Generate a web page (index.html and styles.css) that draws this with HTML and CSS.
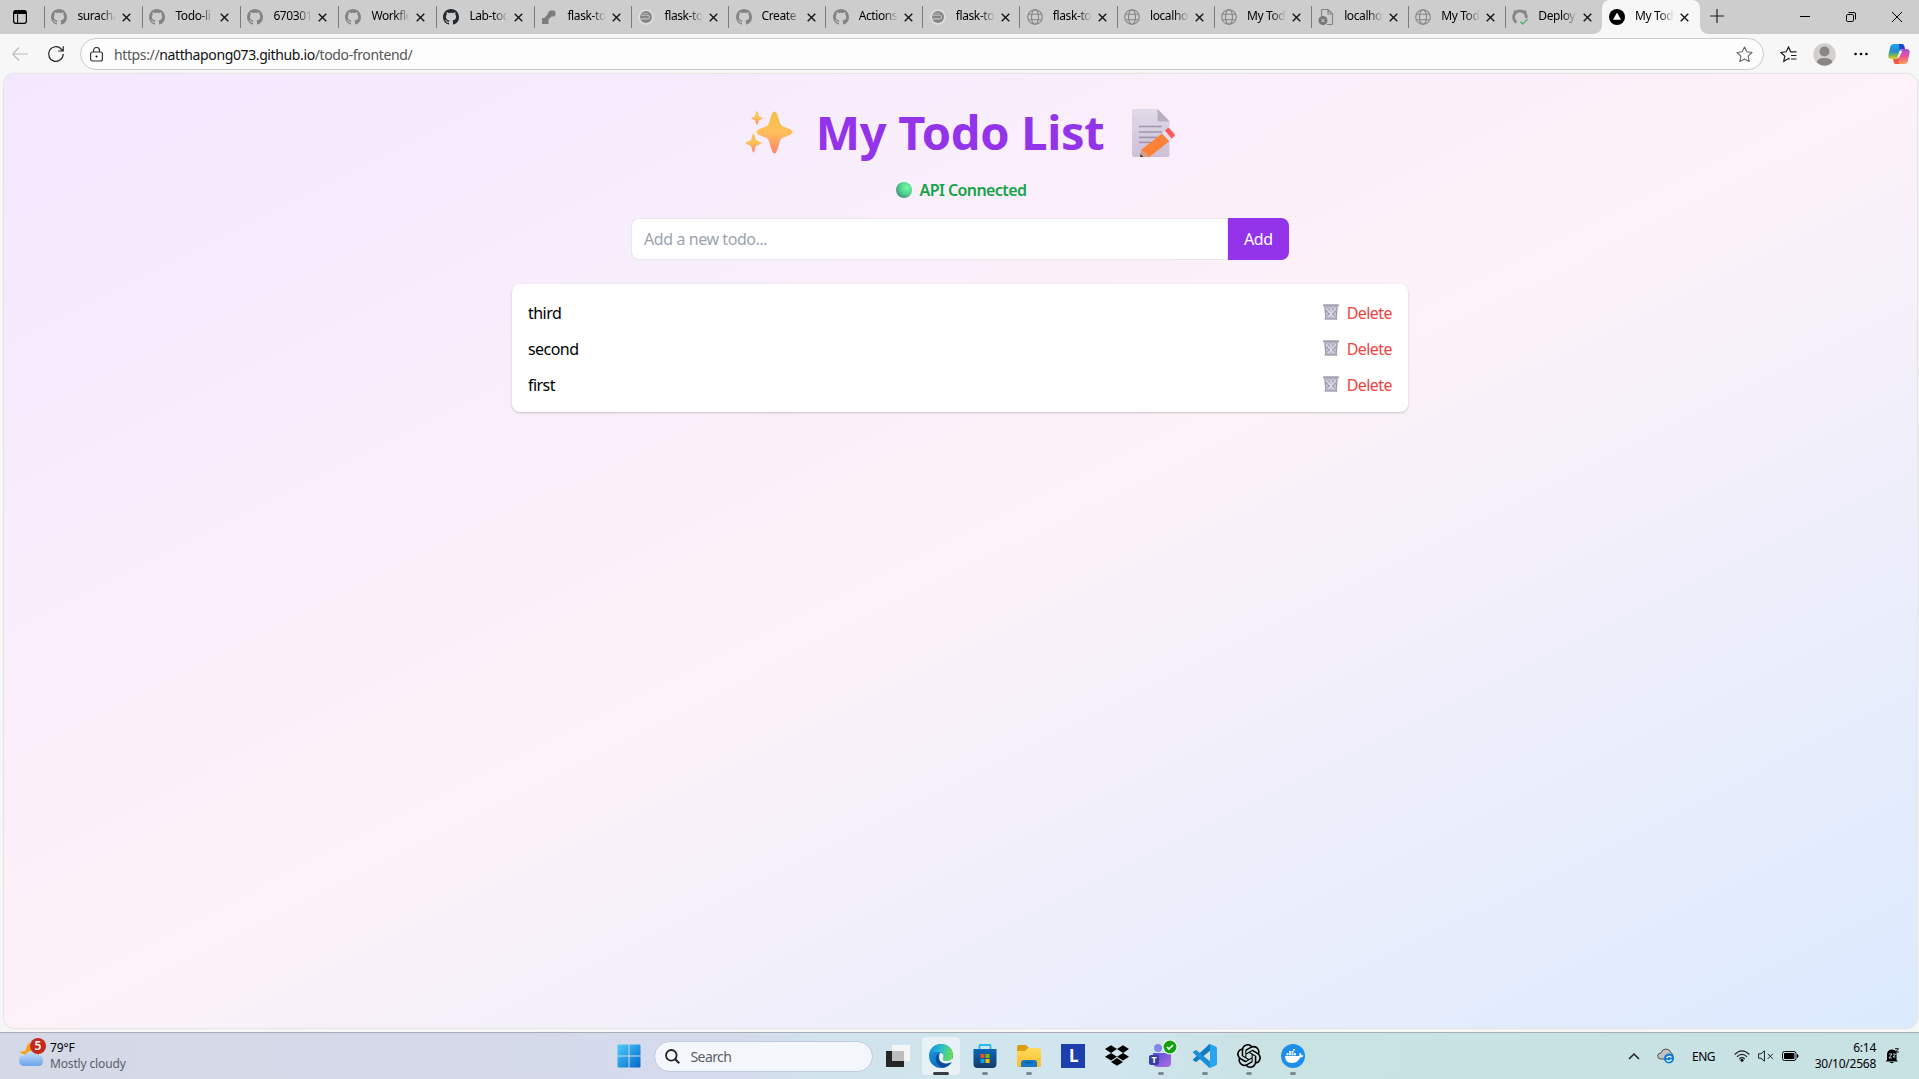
FILE: index.html
```html
<!DOCTYPE html>
<html lang="en">
<head>
<meta charset="utf-8">
<title>My Todo List</title>
<link rel="stylesheet" href="styles.css">
</head>
<body>
<svg class="defs" aria-hidden="true">
  <defs>
    <symbol id="gh" viewBox="0 0 16 16"><path fill="currentColor" d="M8 0C3.58 0 0 3.58 0 8c0 3.54 2.29 6.53 5.47 7.59.4.07.55-.17.55-.38 0-.19-.01-.82-.01-1.49-2.01.37-2.53-.49-2.69-.94-.09-.23-.48-.94-.82-1.13-.28-.15-.68-.52-.01-.53.63-.01 1.08.58 1.23.82.72 1.21 1.87.87 2.33.66.07-.52.28-.87.51-1.07-1.78-.2-3.64-.89-3.64-3.95 0-.87.31-1.59.82-2.15-.08-.2-.36-1.02.08-2.12 0 0 .67-.21 2.2.82.64-.18 1.32-.27 2-.27s1.36.09 2 .27c1.53-1.04 2.2-.82 2.2-.82.44 1.1.16 1.92.08 2.12.51.56.82 1.27.82 2.15 0 3.07-1.87 3.75-3.65 3.95.29.25.54.73.54 1.48 0 1.07-.01 1.93-.01 2.2 0 .21.15.46.55.38A8.01 8.01 0 0 0 16 8c0-4.42-3.58-8-8-8z"/></symbol>
    <symbol id="globe" viewBox="0 0 16 16"><g fill="none" stroke="#858585" stroke-width="1.1"><circle cx="8" cy="8" r="7.3"/><ellipse cx="8" cy="8" rx="3.5" ry="7.3"/><path d="M1.3 5.3h13.4M1.3 10.7h13.4"/></g></symbol>
    <symbol id="ship" viewBox="0 0 16 16"><circle cx="8" cy="8" r="7.8" fill="#dedede"/><circle cx="8" cy="8" r="6" fill="#858585"/><path d="M2.5 6.2h7q2 0 2 2t-2 1.700h-7" fill="none" stroke="#c4c4c4" stroke-width="1.100"/><path d="M3.800 4.500h6" stroke="#aaa"/></symbol>
    <symbol id="pipe" viewBox="0 0 16 16"><path d="M1 9h6.500v6H1z" fill="#7d7d7d"/><path d="M5 10l5-5" stroke="#7d7d7d" stroke-width="4"/><path d="M6.500 4.500 9 1.500h4l1.500 1.500v3L13 7.500H9z" fill="#7d7d7d"/></symbol>
    <symbol id="doc" viewBox="0 0 16 16"><path d="M3.500 7V1.500q0-1 1-1H10L14.500 5v9.500q0 1-1 1H9M10 .5V5h4.500" fill="none" stroke="#858585" stroke-width="1.200"/><circle cx="5" cy="11.500" r="4.500" fill="#777"/><path d="m3.400 9.900 3.200 3.200m0-3.200-3.200 3.200" stroke="#ddd"/></symbol>
    <symbol id="ghok" viewBox="0 0 16 16"><path d="M4.500 13.500A6.300 6.300 0 1 1 14.200 9" fill="none" stroke="#858585" stroke-width="2.800"/><path d="M2.800 1.500v4M13.200 1.500v4" stroke="#858585" stroke-width="2.200"/><path d="m8.500 12.800 2.300 2.200 4.700-5" fill="none" stroke="#59ac6e" stroke-width="1.300"/></symbol>
    <symbol id="vercel" viewBox="0 0 16 16"><circle cx="8" cy="8" r="8" fill="#000"/><path d="M8 3.600 12 10.700H4z" fill="#fff"/></symbol>
    <symbol id="x" viewBox="0 0 10 10"><path d="m.8.8 8.400 8.400m0-8.400L.8 9.200" stroke="#111" stroke-width="1.500"/></symbol>
    <symbol id="bin" viewBox="0 0 16 16"><path d="M1.200 2h13.600l-1 12.500H2.200z" fill="#c7c2d2"/><path d="m4 3.500 8.500 9M8 3.500l5 5M3 7l6 6M12 3.500l-8.500 9M8 3.500l-5 5M13 7l-6 6" stroke="#8f889f" stroke-width=".6"/><path d="m3.500 4 7 9M12.500 4l-7 9M8 4v9" stroke="#eeeaf5" stroke-width=".8"/><path d="m2 3 .8 11M14 3l-.8 11" stroke="#9b96a9"/><rect y=".2" width="16" height="2.200" rx=".7" fill="#a49fae"/><rect x="1.500" y="13.800" width="13" height="2" rx=".7" fill="#aaa6b3"/></symbol>
    <linearGradient id="spark" x1="0" y1="0" x2="0" y2="1"><stop stop-color="#f4c247"/><stop offset=".5" stop-color="#ffbe5b"/><stop offset="1" stop-color="#ff8370"/></linearGradient>
    <linearGradient id="paper" x1="0" y1="0" x2="0" y2="1"><stop stop-color="#e1dae9"/><stop offset="1" stop-color="#ccc0d6"/></linearGradient>
    <radialGradient id="green" cx=".68" cy=".35" r=".75"><stop stop-color="#6ffaa0"/><stop offset=".5" stop-color="#53d98e"/><stop offset="1" stop-color="#458d80"/></radialGradient>
    <linearGradient id="win" x1="0" y1="0" x2="1" y2="1"><stop stop-color="#4ccefb"/><stop offset="1" stop-color="#0067c9"/></linearGradient>
    <linearGradient id="edgeTop" x1="0" y1=".3" x2="1" y2=".5"><stop stop-color="#188edb"/><stop offset=".45" stop-color="#28bdd0"/><stop offset="1" stop-color="#6ddd50"/></linearGradient>
    <linearGradient id="edgeLow" x1="0" y1="0" x2="1" y2="1"><stop stop-color="#1b9de2"/><stop offset="1" stop-color="#0a55b5"/></linearGradient>
    <linearGradient id="copA" x1="0" y1="0" x2="0" y2="1"><stop stop-color="#1ca7ee"/><stop offset=".5" stop-color="#278dcc"/><stop offset=".75" stop-color="#78b757"/><stop offset="1" stop-color="#e8cb28"/></linearGradient>
    <linearGradient id="copB" x1="0" y1="0" x2="0" y2="1"><stop stop-color="#a251e4"/><stop offset=".5" stop-color="#ec5592"/><stop offset="1" stop-color="#ff9d55"/></linearGradient>
    <linearGradient id="bag" x1="0" y1="0" x2="0" y2="1"><stop stop-color="#0a68b5"/><stop offset="1" stop-color="#173a68"/></linearGradient>
    <linearGradient id="fold" x1="0" y1="0" x2="0" y2="1"><stop stop-color="#ffdc60"/><stop offset="1" stop-color="#f9bd25"/></linearGradient>
    <linearGradient id="team" x1="0" y1="0" x2="1" y2="1"><stop stop-color="#4f52cf"/><stop offset="1" stop-color="#b56bea"/></linearGradient>
    <linearGradient id="cloud" x1="0" y1="0" x2="0" y2="1"><stop stop-color="#c7e2fd"/><stop offset="1" stop-color="#6ca3e8"/></linearGradient>
  </defs>
</svg>

<div class="browser">
  <header class="strip">
    <svg class="workspaces" width="14" height="14" viewBox="0 0 14 14"><rect x=".6" y=".6" width="12.800" height="12.800" rx="2.300" fill="none" stroke="#000" stroke-width="1.200"/><path d="M1 1h12v3H1z"/><path d="M4.600 4v9" stroke="#000"/></svg>
    <nav class="tabs">
      <div class="tab wide"><svg class="fav"><use href="#gh"/></svg><span>suracha</span><svg class="close"><use href="#x"/></svg></div>
      <div class="tab wide"><svg class="fav"><use href="#gh"/></svg><span>Todo-li</span><svg class="close"><use href="#x"/></svg></div>
      <div class="tab wide"><svg class="fav"><use href="#gh"/></svg><span>670301</span><svg class="close"><use href="#x"/></svg></div>
      <div class="tab wide"><svg class="fav"><use href="#gh"/></svg><span>Workflo</span><svg class="close"><use href="#x"/></svg></div>
      <div class="tab wide"><svg class="fav dark"><use href="#gh"/></svg><span>Lab-tod</span><svg class="close"><use href="#x"/></svg></div>
      <div class="tab"><svg class="fav"><use href="#pipe"/></svg><span>flask-to</span><svg class="close"><use href="#x"/></svg></div>
      <div class="tab"><svg class="fav"><use href="#ship"/></svg><span>flask-to</span><svg class="close"><use href="#x"/></svg></div>
      <div class="tab"><svg class="fav"><use href="#gh"/></svg><span>Create</span><svg class="close"><use href="#x"/></svg></div>
      <div class="tab"><svg class="fav"><use href="#gh"/></svg><span>Actions</span><svg class="close"><use href="#x"/></svg></div>
      <div class="tab"><svg class="fav"><use href="#ship"/></svg><span>flask-to</span><svg class="close"><use href="#x"/></svg></div>
      <div class="tab"><svg class="fav"><use href="#globe"/></svg><span>flask-to</span><svg class="close"><use href="#x"/></svg></div>
      <div class="tab"><svg class="fav"><use href="#globe"/></svg><span>localho</span><svg class="close"><use href="#x"/></svg></div>
      <div class="tab"><svg class="fav"><use href="#globe"/></svg><span>My Tod</span><svg class="close"><use href="#x"/></svg></div>
      <div class="tab"><svg class="fav"><use href="#doc"/></svg><span>localho</span><svg class="close"><use href="#x"/></svg></div>
      <div class="tab"><svg class="fav"><use href="#globe"/></svg><span>My Tod</span><svg class="close"><use href="#x"/></svg></div>
      <div class="tab"><svg class="fav"><use href="#ghok"/></svg><span>Deploy</span><svg class="close"><use href="#x"/></svg></div>
      <div class="tab active"><svg class="fav"><use href="#vercel"/></svg><span>My Tod</span><svg class="close"><use href="#x"/></svg></div>
    </nav>
    <svg class="newtab" width="14" height="14" viewBox="0 0 14 14"><path d="M7 0v14M0 7h14" stroke="#222" stroke-width="1.200"/></svg>
    <div class="winctl">
      <svg width="10" height="10" viewBox="0 0 10 10"><path d="M0 4.500h10" stroke="#000"/></svg>
      <svg width="10" height="10" viewBox="0 0 10 10"><rect x=".5" y="2.500" width="7" height="7" rx="1.200" fill="none" stroke="#000"/><path d="M2.500.5H8q1.500 0 1.500 1.500v5.500" fill="none" stroke="#000"/></svg>
      <svg width="10" height="10" viewBox="0 0 10 10"><path d="m0 0 10 10M10 0 0 10" stroke="#000"/></svg>
    </div>
  </header>

  <div class="toolbar">
    <svg class="back" width="16" height="14" viewBox="0 0 16 14"><path d="M7 .5.700 7 7 13.500M1 7h15" fill="none" stroke="#b8b8b8" stroke-width="1.100"/></svg>
    <svg class="reload" width="18" height="18" viewBox="0 0 18 18"><path d="M16.200 9A7.300 7.300 0 1 1 14.200 4L16 5.800M16.200 1.200V6h-5" fill="none" stroke="#222" stroke-width="1.200"/></svg>
    <div class="address">
      <svg class="lock" width="13" height="15" viewBox="0 0 13 15"><rect x=".6" y="5" width="11.800" height="9" rx="2" fill="none" stroke="#333" stroke-width="1.200"/><path d="M3.500 5V3.500a3 3 0 0 1 6 0V5" fill="none" stroke="#333" stroke-width="1.200"/><circle cx="6.500" cy="9.500" r="1"/></svg>
      <span class="url">https://<b>natthapong073.github.io</b>/todo-frontend/</span>
      <svg class="star" width="17" height="17" viewBox="0 0 17 17"><path d="m8.500 1 2.300 4.800 5.200.7-3.800 3.700 1 5.300-4.700-2.600-4.700 2.600 1-5.300L1 6.500l5.200-.7z" fill="none" stroke="#666" stroke-width="1.100" stroke-linejoin="round"/></svg>
    </div>
    <svg class="favs" width="17" height="17" viewBox="0 0 17 17"><path d="M9.500 13.500 8.500 12.500l-4.700 2.700 1-5.100L1 6.500l5.200-.7L8.500 1l2.200 4.800h5.800M11 9.500h5.500M11 13h5.500" fill="none" stroke="#222" stroke-width="1.200"/></svg>
    <svg class="profile" width="23" height="23" viewBox="0 0 23 23"><circle cx="11.500" cy="11.500" r="11.200" fill="#d2d0ce"/><circle cx="11.500" cy="8.500" r="5" fill="#8a8683"/><path d="M3.800 19.600Q3.800 15 11.500 15t7.700 4.600A11.200 11.200 0 0 1 3.800 19.600z" fill="#8a8683"/></svg>
    <svg class="dots" width="14" height="4" viewBox="0 0 14 4"><circle cx="1.600" cy="2" r="1.300"/><circle cx="7" cy="2" r="1.300"/><circle cx="12.400" cy="2" r="1.300"/></svg>
    <svg class="copilot" width="22" height="20" viewBox="0 0 22 20"><path d="M9 0h5q1.500 0 2 1.500L17 5h-3q-2 0-2.600 2L9.500 13.500Q9 15 7 15H3.500Q0 15 .3 11.500L2.200 3Q3 0 6 0z" fill="url(#copA)"/><path d="M11 0h3q1.500 0 2 1.500L17 5h-3q-2 0-2.500 1.500z" fill="#1c45c7"/><path d="M13 20H8q-1.500 0-2-1.500L5.200 15H8q2 0 2.600-2l1.900-6.500Q13 5 15 5h3.500q3.500 0 3.200 3.500L19.800 17Q19 20 16 20z" fill="url(#copB)"/><path d="M11 20H8q-1.500 0-2-1.500L5.200 15H8q2 0 2.500-1.500z" fill="#ef5a40"/><path d="M12.300 7h2L11 13.500H9.500z" fill="#f7f7f7"/></svg>
  </div>

  <main class="page">
    <h1>
      <svg width="48" height="44" viewBox="0 0 48 44"><g fill="url(#spark)"><path d="M29.500.5c2 0 3.500 4 5 10 .8 3 1.800 4.500 5 5.500 5 1.800 8 3 8 5s-3 3.500-8 5c-3.200 1-4.200 2.500-5 5.500-1.500 6-3 11-5 11s-3.500-5-5-11c-.8-3-2-4.500-5-5.500-5-1.500-8-3-8-5s3-3.200 8-5c3-1 4.200-2.500 5-5.500 1.500-6 3-10 5-10z"/><path d="M12 0c.7 0 1.500 5 2.300 5.600C15 6.200 18 6.500 18 7.200c0 .8-3 1.200-3.700 1.800-.8.700-1.600 5-2.300 5S10.500 9.700 9.700 9C9 8.400 6 8 6 7.200c0-.7 3-1 3.700-1.600C10.500 5 11.300 0 12 0z"/><path d="M8.500 22.500c1 0 1.700 5.500 2.700 6.500s5.300 2 5.300 3-4.300 2-5.300 3-1.700 6.500-2.700 6.500S6.800 36 5.800 35 .5 33 .5 32s4.300-2 5.300-3 1.700-6.500 2.700-6.500z"/></g></svg>
      <span>My Todo List</span>
      <svg width="43" height="49" viewBox="0 0 43 49"><path d="M2 0h24l11.500 12v34q0 2-2 2H2q-2 0-2-2V2Q0 0 2 0z" fill="url(#paper)"/><path d="M25.500 0v10.500q0 2 2 2h10z" fill="#b9afc1"/><path d="M7 17.500h23M7 23h23M7 28.300h18M7 33.300h12" stroke="#a397ae" stroke-width="1.700"/><path d="m30 24.500 7.500 7.500-20 16-9-2 1-5.500z" fill="#fd8136"/><path d="m9.500 40.500 8 7.500H8.300z" fill="#d2a18c"/><path d="M8.300 45v3h3z" fill="#552447"/><path d="m30 24.500 4-3.500 7 8-3.500 3.500z" fill="#e7dff5"/><path d="m33 21.500 2-2q1.500-1 3 .5l4 4.500q1.500 1.500 0 3l-2.500 2z" fill="#fb5a54"/></svg>
    </h1>
    <p class="status"><svg width="16" height="16" viewBox="0 0 16 16"><circle cx="8" cy="8" r="8" fill="url(#green)"/></svg><span>API Connected</span></p>
    <form class="add">
      <div class="field">Add a new todo...</div>
      <div class="button">Add</div>
    </form>
    <ul class="todos">
      <li><span>third</span><a><svg><use href="#bin"/></svg><span>Delete</span></a></li>
      <li><span>second</span><a><svg><use href="#bin"/></svg><span>Delete</span></a></li>
      <li><span>first</span><a><svg><use href="#bin"/></svg><span>Delete</span></a></li>
    </ul>
  </main>
</div>

<footer class="taskbar">
  <div class="weather">
    <svg width="28" height="29" viewBox="0 0 28 29"><path d="m10 4 2 6 8-2v12H5l1.500-3L0 14l6-1z" fill="#f5a11c"/><path d="M6 28q-6 0-6-5.500T6 17.500Q8 13 13 13t6 4q5 0 5 5.500T19 28z" fill="url(#cloud)"/><circle cx="19" cy="8" r="8" fill="#c42b1c"/><text x="19" y="12.200" class="count">5</text></svg>
    <div class="forecast"><span>79°F</span><span class="muted">Mostly cloudy</span></div>
  </div>
  <div class="apps">
    <svg class="start" width="24" height="24" viewBox="0 0 24 24"><path d="M.5 1.500q0-1 1-1h10v11H.5zM12.500.5h10q1 0 1 1v10h-11zM.5 12.500h11v11h-10q-1 0-1-1zM12.500 12.500h11v10q0 1-1 1h-10z" fill="url(#win)"/></svg>
    <div class="search"><svg width="15" height="15" viewBox="0 0 15 15"><circle cx="6.300" cy="6.300" r="5.300" fill="none" stroke="#222" stroke-width="1.800"/><path d="m10.200 10.200 4 4" stroke="#222" stroke-width="2"/></svg><span>Search</span></div>
    <svg class="views" width="24" height="24" viewBox="0 0 24 24"><path d="M0 7h18v16H0z" fill="#252525"/><path d="M6 1h18v16H6z" fill="#f5f5f5"/><path d="M6 7h12v10H6z" fill="#bdbdbd"/></svg>
    <div class="tile current"><svg width="24" height="24" viewBox="0 0 24 24"><circle cx="12" cy="12" r="12" fill="url(#edgeLow)"/><path d="M.2 10.500C1 4.500 6 0 12 0c7 0 12 5 12 10.500 0 4-3 6.500-6.800 6.500-3 0-4-1.500-3-3 1.500-2.300.3-6-4.200-6C5 8 1.500 8 .2 10.500z" fill="url(#edgeTop)"/><path d="M9.500 9.500C5 12 6 22 14.500 23.700c4-.8 7-3.200 8.500-6-4 2.500-9.500 2.300-12-1-1.500-2-1.800-4.500-1.500-7.200z" fill="#104a9c"/><path d="M11.500 8.800c3 .5 3.800 3.200 2.700 5.200-1 1.500 0 3 3 3 2.500 0 5-1 6.300-3.500L24 18h-1.500c-4 2.200-9 2-11.500-1.300-1.500-2-1.200-6 .5-7.900z" fill="#e9f3f7"/></svg></div>
    <div class="tile run"><svg width="24" height="24" viewBox="0 0 24 24"><path d="M6.500 6V1.800q0-.8.800-.8h9.400q.8 0 .8.800V6" fill="none" stroke="#25bdf0" stroke-width="1.800"/><path d="M.5 5h23v15q0 4-4 4h-15q-4 0-4-4z" fill="url(#bag)"/><path d="M7.500 10h4v4h-4z" fill="#f25022"/><path d="M12.500 10h4v4h-4z" fill="#7fba00"/><path d="M7.500 15h4v4h-4z" fill="#00a4ef"/><path d="M12.500 15h4v4h-4z" fill="#ffb900"/></svg></div>
    <div class="tile run"><svg width="24" height="24" viewBox="0 0 24 24"><path d="M0 3q0-2 2-2h7l3 3h10v5H0z" fill="#dc9d12"/><path d="M0 7h8l3-3h11q2 0 2 2v15q0 2-2 2H2q-2 0-2-2z" fill="url(#fold)"/><path d="M4 23v-4q0-3 3-3h10q3 0 3 3v4z" fill="#1479c9"/><path d="M8 18.500h8" stroke="#075a9f" stroke-width="1.500"/></svg></div>
    <div class="tile"><svg width="24" height="24" viewBox="0 0 24 24"><path d="M0 0h24v24H0z" fill="#1e3fae"/><text x="8" y="18" class="ell">L</text></svg></div>
    <div class="tile"><svg width="24" height="24" viewBox="0 0 24 24"><path d="M6 1.300 0 5.100 6 9l6-3.900zM18 1.300l-6 3.800L18 9l6-3.900zM0 12.800l6 3.800 6-3.800L6 9zM18 9l-6 3.800 6 3.800 6-3.800zM6 17.900l6 3.800 6-3.800-6-3.900z"/></svg></div>
    <div class="tile run teams"><svg width="30" height="28" viewBox="0 0 30 28"><circle cx="9" cy="8" r="4" fill="#8588eb"/><path d="M4 13h18v10q0 4-4 4H9q-5 0-5-5z" fill="url(#team)"/><rect x="0" y="15" width="10" height="10" rx="2" fill="#373cab"/><text x="5" y="23.300" class="tee">T</text><circle cx="21" cy="7" r="7.500" fill="#fff"/><circle cx="21" cy="7" r="6.500" fill="#13a10e"/><path d="m18 7 2 2 4-4" fill="none" stroke="#fff" stroke-width="1.700"/></svg></div>
    <div class="tile run"><svg width="24" height="24" viewBox="0 0 24 24"><path d="m17 0 5.800 2.600q1.200.6 1.200 2v14.800q0 1.400-1.200 2L17 24z" fill="#2aa4ee"/><path d="M17 0v6.800L3.200 18 .4 16.500q-.8-.8 0-1.600L16 .4z" fill="#117bc1"/><path d="M17 24v-6.800L3.200 6 .4 7.500q-.8.8 0 1.600L16 23.600z" fill="#1b8ed5"/></svg></div>
    <div class="tile run"><svg width="24" height="24" viewBox="0 0 24 24"><path d="M22.282 9.821a5.985 5.985 0 0 0-.516-4.910 6.046 6.046 0 0 0-6.510-2.900A6.065 6.065 0 0 0 4.981 4.182a5.985 5.985 0 0 0-3.998 2.900 6.046 6.046 0 0 0 .743 7.097 5.980 5.980 0 0 0 .511 4.911 6.051 6.051 0 0 0 6.515 2.900A5.985 5.985 0 0 0 13.260 24a6.056 6.056 0 0 0 5.772-4.206 5.989 5.989 0 0 0 3.998-2.900 6.056 6.056 0 0 0-.748-7.073zM13.260 22.430a4.476 4.476 0 0 1-2.876-1.041l.142-.080 4.778-2.758a.795.795 0 0 0 .393-.681v-6.737l2.020 1.169a.071.071 0 0 1 .038.052v5.583a4.504 4.504 0 0 1-4.495 4.494zM3.600 18.304a4.471 4.471 0 0 1-.535-3.014l.142.085 4.783 2.758a.771.771 0 0 0 .781 0l5.843-3.369v2.332a.080.080 0 0 1-.033.062L9.740 19.950a4.499 4.499 0 0 1-6.141-1.646zM2.341 7.896a4.485 4.485 0 0 1 2.366-1.973V11.600a.766.766 0 0 0 .388.677l5.814 3.354-2.020 1.169a.076.076 0 0 1-.071 0l-4.830-2.787A4.504 4.504 0 0 1 2.341 7.872zM18.937 11.751 13.104 8.364 15.119 7.200a.076.076 0 0 1 .071 0l4.830 2.791a4.494 4.494 0 0 1-.677 8.104v-5.677a.790.790 0 0 0-.407-.667zM20.948 8.728l-.142-.085-4.774-2.782a.776.776 0 0 0-.785 0L9.409 9.230V6.897a.066.066 0 0 1 .028-.062l4.830-2.787a4.499 4.499 0 0 1 6.680 4.660zM8.307 12.863l-2.020-1.164a.080.080 0 0 1-.038-.057V6.074a4.499 4.499 0 0 1 7.376-3.454l-.142.081L8.704 5.459a.795.795 0 0 0-.393.681zM9.404 10.498l2.602-1.500 2.607 1.500v2.999l-2.597 1.500-2.607-1.500z"/></svg></div>
    <div class="tile run"><svg width="24" height="24" viewBox="0 0 24 24"><circle cx="12" cy="12" r="12" fill="#1d8feb"/><path d="M4 12h14.300q-.3-2 .7-3.200 1.500 1 1.400 2.400 1.500-.2 2.300.4-1 2-3.500 1.900Q16.500 19 10.500 19 4.200 19 4 12z" fill="#fff"/><path d="M5.500 9.200h2v2h-2zM8 9.200h2v2H8zM10.500 9.200h2v2h-2zM13 9.200h2v2h-2zM8 6.900h2v1.900H8zM10.500 6.900h2v1.900h-2zM12 5h2v1.500h-2z" fill="#fff"/></svg></div>
  </div>
  <div class="tray">
    <svg width="12" height="8" viewBox="0 0 12 8"><path d="m1 7 5-5 5 5" fill="none" stroke="#222" stroke-width="1.500"/></svg>
    <svg class="drive" width="18" height="16" viewBox="0 0 18 16"><path d="M4 11Q.7 11 .7 8T4 5q1-4 5-4t5 4q2 .5 2 3v3z" fill="#c2c2c2" stroke="#555"/><circle cx="12" cy="10.500" r="5" fill="#0c7bd9"/><path d="M9.500 10q2.500-3 5-.5M14.500 11.500q-2.500 3-5 .5" fill="none" stroke="#fff" stroke-width="1.200"/></svg>
    <span class="lang">ENG</span>
    <svg class="wifi" width="16" height="12" viewBox="0 0 16 12"><path d="M.7 4.500q7.300-7.300 14.600 0M2.900 6.800q5.100-5 10.200 0M5.200 9q2.800-2.600 5.600 0" fill="none" stroke="#222" stroke-width="1.100"/><circle cx="8" cy="10.200" r="1.500"/></svg>
    <svg class="vol" width="16" height="12" viewBox="0 0 16 12"><path d="M.6 3.800H3L6.400.8v10.400L3 8.200H.6zM9.800 3.800l5 5m0-5-5 5" fill="none" stroke="#222"/></svg>
    <svg class="batt" width="17" height="10" viewBox="0 0 17 10"><rect x=".5" y=".5" width="13.500" height="9" rx="2" fill="none" stroke="#111"/><rect x="2" y="2" width="10.500" height="6" rx=".8"/><path d="M15 3q1.500.3 1.500 2T15 7z"/></svg>
    <div class="clock"><span>6:14</span><span>30/10/2568</span></div>
    <svg class="bell" width="15" height="16" viewBox="0 0 15 16"><path d="M2 12V6q.5-4.500 5-4.500 3 0 4.500 2V12l1.500 1.500H.5zM4.500 14h4.500q-2 2.300-4.500 0z"/><path d="M4 6h3l-3 4h3M8 6h2.500L8 9h2.500" fill="none" stroke="#cbe3e4" stroke-width=".9"/><path d="M10 .7h3.500L10.500 4h3.500" fill="none" stroke="#111"/></svg>
  </div>
</footer>
</body>
</html>
```
FILE: styles.css
```css
* { box-sizing: border-box; }
body {
  margin: 0;
  width: 1919px;
  height: 1079px;
  overflow: hidden;
  display: flex;
  flex-direction: column;
  font-family: "Noto Sans", "Open Sans", sans-serif;
  color: #000;
}
.defs { position: absolute; width: 0; height: 0; }
svg { flex: none; display: block; }
span { white-space: nowrap; }

.browser { height: 1032px; background: #f7f7f7; display: flex; flex-direction: column; }

/* Tab strip */
.strip { height: 34px; flex: none; background: #cdcdcd; display: flex; align-items: center; }
.workspaces { margin: 0 17px 0 13px; }
.tabs { display: flex; height: 34px; }
.tab { width: 97.1px; display: flex; align-items: center; padding-left: 6.4px; border-left: 1px solid transparent; border-image: linear-gradient(transparent 7px, #7b7b7b 7px, #7b7b7b 27px, transparent 27px) 1; }
.tab.wide { width: 98px; }
.tab span { width: 38.500px; margin-left: 10px; font-size: 12px; letter-spacing: -.4px; line-height: 20px; padding-bottom: 2px; -webkit-mask-image: linear-gradient(90deg, #000 24px, transparent 39px); mask-image: linear-gradient(90deg, #000 24px, transparent 39px); }
.tab.active { position: relative; width: 98px; border: 0; padding-left: 7px; background: #f7f7f7; border-radius: 8px 8px 0 0; }
.tab.active::before, .tab.active::after { content: ""; position: absolute; bottom: 0; width: 8px; height: 8px; }
.tab.active::before { left: -8px; background: radial-gradient(circle at 0 0, transparent 7.5px, #f7f7f7 8px); }
.tab.active::after { right: -8px; background: radial-gradient(circle at 100% 0, transparent 7.5px, #f7f7f7 8px); }
.fav { width: 16px; height: 16px; color: #858585; }
.fav.dark { color: #24292f; }
.close { width: 9px; height: 9px; margin-left: 6.500px; }
.newtab { margin-left: 10px; margin-top: -3px; }
.winctl { margin-left: auto; margin-right: 17px; display: flex; gap: 36px; }

/* Toolbar */
.toolbar { height: 40px; flex: none; display: flex; align-items: center; }
.back { margin-left: 12px; }
.reload { margin-left: 19px; }
.address { margin-left: 15px; width: 1684px; height: 32px; border: 1px solid #c9cacd; border-radius: 16px; background: #fdfdfd; display: flex; align-items: center; padding: 0 10px 0 9px; }
.url { margin-left: 11px; font-size: 14px; letter-spacing: -.38px; color: #555; }
.url b { font-weight: 400; color: #111; }
.star { margin-left: auto; }
.favs { margin-left: 15.500px; }
.profile { margin-left: 16px; }
.dots { margin-left: 18px; }
.copilot { margin-left: 20px; }

/* Page */
.page {
  width: 1913px;
  height: 954px;
  margin-left: 4px;
  border-radius: 10px;
  background: linear-gradient(to bottom right, #f3e8ff, #fdf2f8, #dbeafe);
  box-shadow: 0 0 2px rgba(0, 0, 0, .28);
  display: flex;
  flex-direction: column;
  align-items: center;
  padding-right: 1px;
}
h1 { margin: 32px 0 0; height: 54px; display: flex; align-items: center; color: #9333ea; font-size: 47px; line-height: 54px; letter-spacing: -.3px; font-weight: 700; }
h1 span { margin: -2px 28px 0 23px; }
.status { margin: 18px 0 0; height: 24px; display: flex; align-items: center; gap: 8px; color: #16a34a; font-weight: 600; font-size: 16px; letter-spacing: -.58px; padding-left: 2px; }
.add { margin: 16px 0 0; width: 658px; height: 42px; display: flex; font-size: 16px; line-height: 41px; }
.field { flex: 1; padding-left: 12px; background: #fff; border: 1px solid #e5e7eb; border-radius: 8px 0 0 8px; color: #9ca3af; letter-spacing: -.42px; }
.button { width: 61px; background: #9333ea; color: #fff; border-radius: 0 8px 8px 0; padding-left: 16px; line-height: 43px; letter-spacing: -.4px; }
.todos { list-style: none; margin: 24px 0 0; padding: 16px; width: 896px; height: 128px; background: #fff; border-radius: 8px; box-shadow: 0 1px 3px rgba(0, 0, 0, .1), 0 1px 2px rgba(0, 0, 0, .1); display: flex; flex-direction: column; gap: 12px; font-size: 16px; line-height: 26px; letter-spacing: -.55px; }
.todos li { display: flex; justify-content: space-between; height: 24px; }
.todos a { display: flex; align-items: center; gap: 7.500px; color: #ef4444; height: 26px; }
.todos a svg { width: 16px; height: 16px; margin-top: -3px; }

/* Taskbar */
.taskbar { height: 47px; border-top: 1px solid #a8adb6; background: linear-gradient(90deg, #d5d9e6, #d5daed 38%, #d1e4ed 43%, #d0e5ee 58%, #c9e2e2 67%, #c8e2e4); display: grid; grid-template-columns: 616.500px 1fr 320px; font-size: 12px; }
.weather { display: flex; padding: 5px 0 0 19px; gap: 3px; }
.count { font: 600 12px "Noto Sans", sans-serif; fill: #fff; text-anchor: middle; }
.forecast { display: flex; flex-direction: column; line-height: 16px; margin-top: 2px; letter-spacing: -.15px; }
.muted { color: #5b5e68; }
.apps { display: flex; align-items: center; }
.search { width: 219px; height: 31px; margin: 0 13px; border-radius: 16px; background: #f3f6fb; border: 1px solid #bfcada; display: flex; align-items: center; padding-left: 10px; font-size: 14px; color: #5b5f66; letter-spacing: -.6px; }
.search span { margin-left: 11px; }
.views { margin-right: 12.500px; }
.tile { width: 38px; height: 38px; margin-right: 6px; display: flex; align-items: center; justify-content: center; position: relative; border-radius: 4px; }
.tile.current { background: #e8f1f6; }
.tile.teams { padding: 0 0 5px 6px; }
.tile.run::after, .tile.current::after { content: ""; position: absolute; bottom: 0; left: 16px; width: 6px; height: 3px; border-radius: 2px; background: #7d8990; }
.tile.current::after { left: 11px; width: 16px; background: #3a3d40; }
.ell { font: 700 17px "Noto Sans", sans-serif; fill: #fff; }
.tee { font: 700 9px "Noto Sans", sans-serif; fill: #fff; text-anchor: middle; }
.tray { display: flex; align-items: center; padding-left: 29px; }
.drive { margin-left: 17px; }
.lang { margin-left: 17px; width: 24px; letter-spacing: -.5px; }
.wifi { margin-left: 18px; }
.vol { margin-left: 8px; }
.batt { margin-left: 8px; }
.clock { margin-left: auto; display: flex; flex-direction: column; align-items: flex-end; line-height: 16px; letter-spacing: -.25px; }
.bell { margin: 0 19px 0 9px; }
```
